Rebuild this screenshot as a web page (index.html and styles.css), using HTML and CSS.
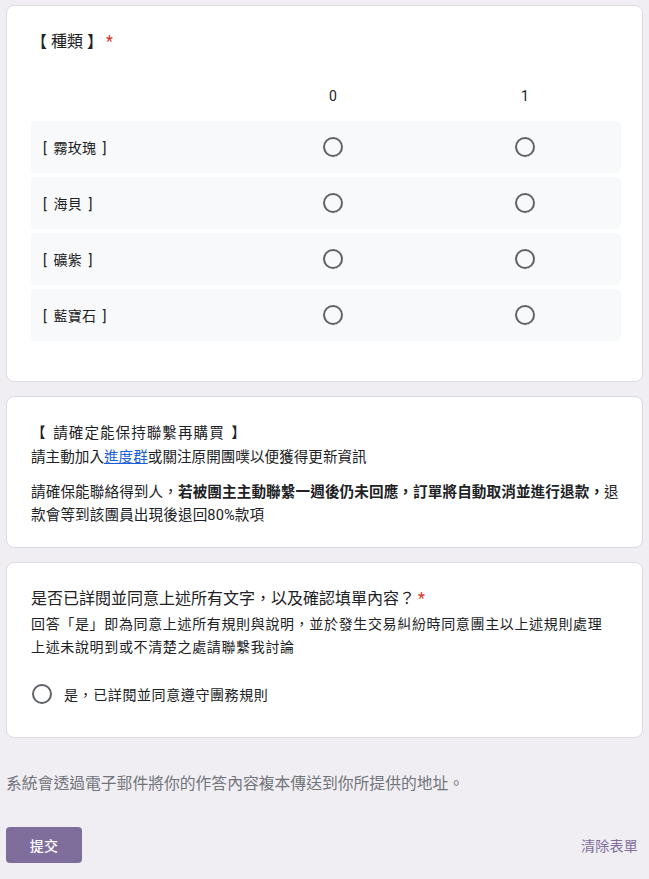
FILE: index.html
```html
<!DOCTYPE html>
<html lang="zh-Hant">
<head>
<meta charset="utf-8">
<title>表單</title>
<link rel="stylesheet" href="styles.css">
</head>
<body>
<div class="page">
  <div class="card card-matrix">
    <div class="q-title">【 種類 】<span class="req">*</span></div>
    <div class="matrix">
      <div class="m-head">
        <div></div>
        <div class="m-col">0</div>
        <div class="m-col">1</div>
      </div>
      <div class="m-row">
        <div class="m-label">[ 霧玫瑰 ]</div>
        <div class="m-cell"><span class="radio"></span></div>
        <div class="m-cell"><span class="radio"></span></div>
      </div>
      <div class="m-row">
        <div class="m-label">[ 海貝 ]</div>
        <div class="m-cell"><span class="radio"></span></div>
        <div class="m-cell"><span class="radio"></span></div>
      </div>
      <div class="m-row">
        <div class="m-label">[ 礦紫 ]</div>
        <div class="m-cell"><span class="radio"></span></div>
        <div class="m-cell"><span class="radio"></span></div>
      </div>
      <div class="m-row">
        <div class="m-label">[ 藍寶石 ]</div>
        <div class="m-cell"><span class="radio"></span></div>
        <div class="m-cell"><span class="radio"></span></div>
      </div>
    </div>
  </div>

  <div class="card card-info">
    <div class="info-title">【 請確定能保持聯繫再購買 】</div>
    <div class="info-line">請主動加入<a class="link" href="#">進度群</a>或關注原開團噗以便獲得更新資訊</div>
    <p class="info-para">請確保能聯絡得到人，<b>若被團主主動聯繫一週後仍未回應，訂單將自動取消並進行退款，</b>退款會等到該團員出現後退回80%款項</p>
  </div>

  <div class="card card-q">
    <div class="q-title">是否已詳閱並同意上述所有文字，以及確認填單內容？<span class="req">*</span></div>
    <div class="q-desc">回答「是」即為同意上述所有規則與說明，並於發生交易糾紛時同意團主以上述規則處理<br>上述未說明到或不清楚之處請聯繫我討論</div>
    <label class="option"><span class="radio"></span><span class="opt-text">是，已詳閱並同意遵守團務規則</span></label>
  </div>

  <div class="footer-note">系統會透過電子郵件將你的作答內容複本傳送到你所提供的地址。</div>

  <div class="actions">
    <button class="submit" type="button">提交</button>
    <a class="clear" href="#">清除表單</a>
  </div>
</div>
</body>
</html>
```

FILE: styles.css
```css
html, body {
  margin: 0;
  padding: 0;
}
body {
  background: #f0eef3;
  font-family: Roboto, "Noto Sans CJK TC", "Noto Sans", sans-serif;
  color: #202124;
}
.page {
  padding: 5px 6px 0 6px;
}
.card {
  background: #fff;
  border: 1px solid #dadce0;
  border-radius: 8px;
  margin-bottom: 14px;
}
.card-matrix {
  padding: 24px 21px 40px 24px;
}
.q-title {
  font-size: 16px;
  line-height: 24px;
  letter-spacing: 0;
}
.req {
  color: #d93025;
  padding-left: 3px;
}
.matrix {
  margin-top: 20px;
}
.m-head, .m-row {
  display: grid;
  grid-template-columns: 206px 192px 192px;
  align-items: center;
}
.m-head {
  height: 43px;
  font-size: 14px;
}
.m-col {
  text-align: center;
}
.m-row {
  height: 52px;
  margin-top: 4px;
  background: #f8f9fa;
  border-radius: 4px;
  font-size: 14px;
}
.m-label {
  padding-left: 12px;
  letter-spacing: .2px;
  word-spacing: 3px;
}
.m-cell {
  display: flex;
  justify-content: center;
  align-items: center;
}
.radio {
  display: inline-block;
  box-sizing: border-box;
  width: 20px;
  height: 20px;
  border: 2px solid #5f6368;
  border-radius: 50%;
}
.card-info {
  padding: 24px 18px 20px 24px;
  font-size: 14.6px;
}
.info-title, .info-line {
  line-height: 24px;
}
.info-title {
  word-spacing: 2px;
  letter-spacing: 1px;
}
.link {
  color: #1a5fd8;
  text-decoration: underline;
}
.info-para {
  margin: 12px 0 0 0;
  line-height: 23px;
  letter-spacing: .1px;
}
.info-para b {
  font-weight: 700;
}
.card-q {
  padding: 24px 24px 31px 24px;
}
.q-desc {
  margin-top: 2px;
  font-size: 14px;
  line-height: 23px;
  letter-spacing: .65px;
}
.option {
  display: flex;
  align-items: center;
  margin-top: 23px;
  height: 24px;
  margin-left: 1px;
}
.opt-text {
  margin-left: 12px;
  font-size: 14px;
  letter-spacing: .6px;
}
.footer-note {
  margin-top: 34px;
  font-size: 15.8px;
  line-height: 24px;
  color: #70757a;
}
.actions {
  margin-top: 31px;
  display: flex;
  justify-content: space-between;
  align-items: center;
}
.submit {
  width: 76px;
  height: 36px;
  border: none;
  border-radius: 4px;
  background: #7f6e9c;
  color: #fff;
  font-family: Roboto, "Noto Sans CJK TC", sans-serif;
  font-size: 14px;
  font-weight: 500;
  letter-spacing: .25px;
  padding: 0;
}
.clear {
  color: #7f6e9c;
  font-size: 14px;
  text-decoration: none;
  margin-right: 5px;
  letter-spacing: .25px;
}
```
